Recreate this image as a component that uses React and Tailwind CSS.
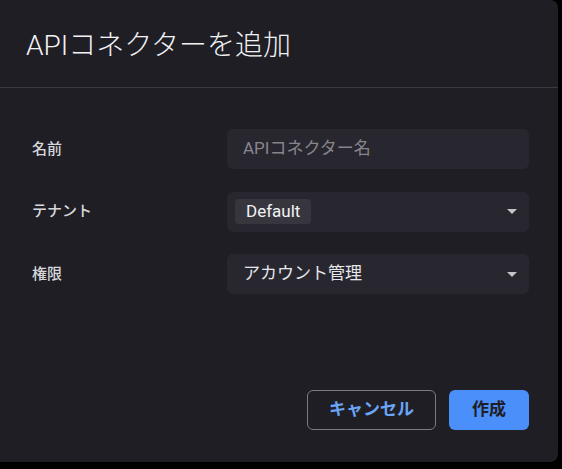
const font = { fontFamily: 'Roboto, "Noto Sans CJK JP", "Noto Sans", sans-serif' };

const Caret = () => (
  <svg width="10" height="5" viewBox="0 0 10 5" className="shrink-0">
    <path d="M0 0 L10 0 L5 5 Z" fill="#c4c4c8" />
  </svg>
);

const Row = ({ label, children }) => (
  <div className="flex items-center h-10">
    <div className="w-[195px] text-[15px] font-medium text-[#d8d8dc]">{label}</div>
    <div className="flex-1 h-10 rounded-md bg-[#282730] flex items-center">{children}</div>
  </div>
);

const App = () => {
  return (
    <div className="w-[562px] h-[469px] bg-black overflow-hidden" style={font}>
      <div className="w-[558px] h-[462px] bg-[#1f1e25] rounded-tr-lg rounded-br-lg flex flex-col">
        {/* header */}
        <div className="pl-[26px] pt-[26px] pb-[21px] border-b border-[#3b3a41]">
          <h1 className="text-[28px] leading-10 text-[#f2f2f4] font-light">APIコネクターを追加</h1>
        </div>

        {/* form */}
        <div className="flex flex-col gap-[22.5px] pt-[41px] pl-8 pr-[29px]">
          <Row label="名前">
            <span className="pl-4 text-[17px] text-[#86858c]">APIコネクター名</span>
          </Row>
          <Row label="テナント">
            <div className="flex-1 pl-2">
              <span className="inline-flex items-center h-[25px] px-[11px] rounded bg-[#37363e] text-[17px] font-normal text-[#f2f2f4]">
                Default
              </span>
            </div>
            <div className="pr-3">
              <Caret />
            </div>
          </Row>
          <Row label="権限">
            <span className="flex-1 pl-4 text-[17px] text-[#e6e6ea]">アカウント管理</span>
            <div className="pr-3">
              <Caret />
            </div>
          </Row>
        </div>

        {/* actions */}
        <div className="flex justify-end gap-[13px] pr-[29px] mt-[96px]">
          <button className="w-[129px] h-10 rounded-md border border-[#7c7b82] text-[17px] font-semibold text-[#6aa5f6]">
            キャンセル
          </button>
          <button className="w-20 h-10 rounded-md bg-[#4a8ffa] text-[17px] font-semibold text-[#1f1e25]">
            作成
          </button>
        </div>
      </div>
    </div>
  );
};

export default App;
